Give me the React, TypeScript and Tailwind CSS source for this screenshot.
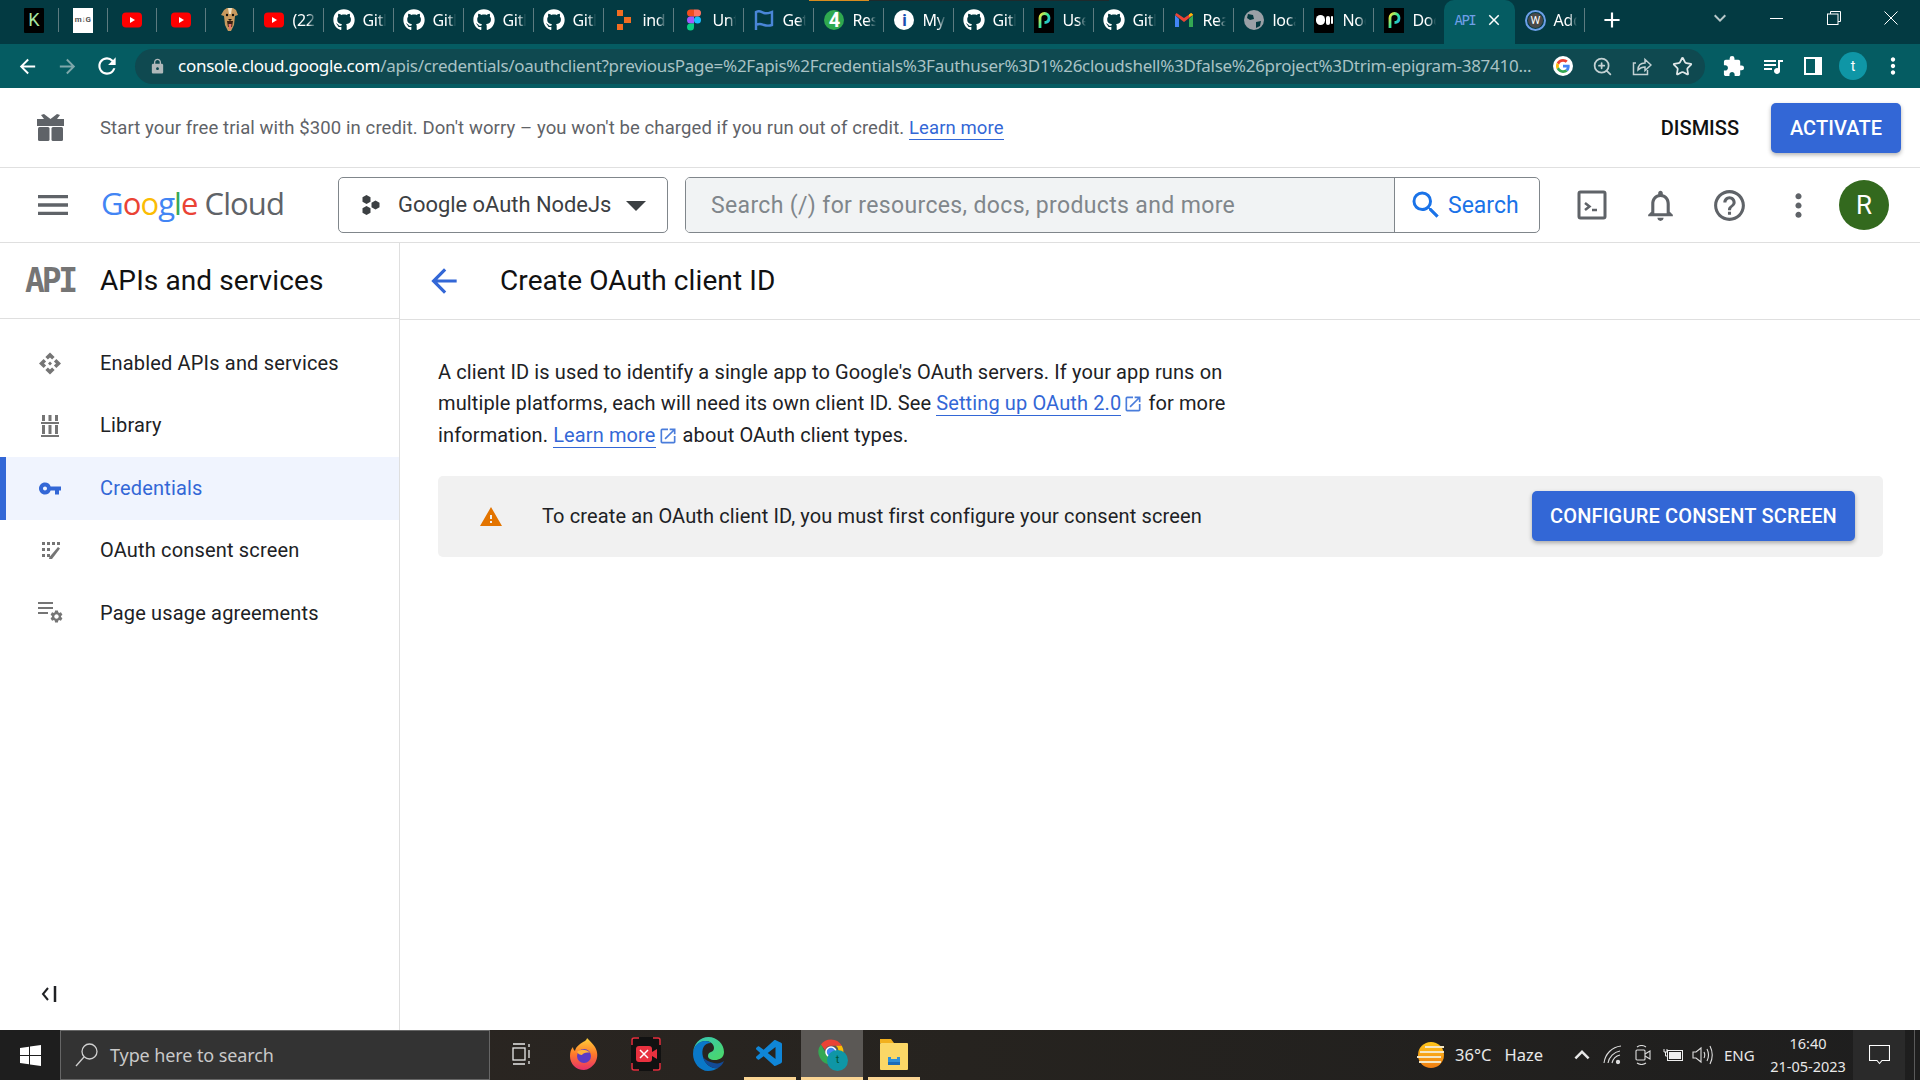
import React from "react";
import { FaGithub } from "react-icons/fa";
import { VscVscode } from "react-icons/vsc";
import {
  MdApi, MdArrowBack, MdArrowForward, MdClose, MdExpandMore, MdExtension, MdHelpOutline, MdLock, MdMenu, MdMoreVert,
  MdNotificationsNone, MdOpenInNew, MdQueueMusic, MdRefresh, MdSearch, MdSettings, MdVpnKey, MdWarning, MdAdd, MdArrowDropDown,
  MdKeyboardArrowUp,
} from "react-icons/md";
import { ZoomIn, Star } from "lucide-react";

const Yt = () => (
  <svg width="20" height="16" viewBox="0 0 20 16"><rect width="20" height="15" y="0.5" rx="4" fill="#f00" /><path d="M8 5l5 3-5 3z" fill="#fff" /></svg>
);
const Gh = () => <FaGithub size={22} color="#fff" />;
const K = () => (
  <div className="w-[20px] h-[25px] bg-black flex items-center justify-center text-[#a8e6a0] text-[18px] leading-none rounded-[1px]">K</div>
);
const Md = () => (
  <div className="w-[20px] h-[25px] bg-white flex items-center justify-center text-[#555] text-[8px] font-bold leading-none">m↓G</div>
);
const Dog = () => (
  <svg width="18" height="26" viewBox="0 0 18 26">
    <path d="M3 3l3-2h6l3 2 2 5-3 1-1 9-3 6H7l-3-6-1-9-3-1z" fill="#c89a5e" />
    <path d="M6 14h6l-1 6H7z" fill="#3a2014" /><path d="M7.5 17h3l-.5 5H8z" fill="#e9756b" />
    <circle cx="6" cy="8" r="1.2" fill="#111" /><circle cx="12" cy="8" r="1.2" fill="#111" /><path d="M7 12h4l-2 2z" fill="#111" />
    <path d="M7 1h4l-1 6H8z" fill="#f2e3c6" />
  </svg>
);
const Ind = () => (
  <svg width="16" height="20" viewBox="0 0 16 20"><rect x="1" y="0" width="6" height="6" fill="#f36d21" /><rect x="8" y="7" width="7" height="6" fill="#f36d21" /><rect x="1" y="14" width="6" height="6" fill="#f36d21" /></svg>
);
const Figma = () => (
  <svg width="14" height="22" viewBox="0 0 14 21">
    <path d="M0 3.5A3.5 3.5 0 013.5 0H7v7H3.500A3.500 3.500 0 010 3.500z" fill="#f24e1e" />
    <path d="M7 0h3.500a3.500 3.500 0 010 7H7z" fill="#ff7262" />
    <path d="M0 10.500A3.500 3.500 0 013.500 7H7v7H3.500A3.500 3.500 0 010 10.500z" fill="#a259ff" />
    <circle cx="10.500" cy="10.500" r="3.500" fill="#1abcfe" />
    <path d="M0 17.500A3.500 3.500 0 013.500 14H7v3.500a3.500 3.500 0 01-7 0z" fill="#0acf83" />
  </svg>
);
const Flag = () => (
  <svg width="20" height="22" viewBox="0 0 20 22" fill="none" stroke="#4a86d8" strokeWidth="2.400"><path d="M2 21V3c4-2 5 0 8 1s5 0 8-1v13c-3 1-5 1-8 0s-4-2-8 0" /></svg>
);
const Four = () => (
  <div className="w-[20px] h-[20px] rounded-full bg-[#2fa84f] text-white text-[20px] font-bold leading-none flex items-center justify-center overflow-hidden">4</div>
);
const Info = () => (
  <div className="w-[20px] h-[20px] rounded-full bg-white text-[#1a4fb0] text-[17px] font-bold leading-none flex items-center justify-center">i</div>
);
const Pd = ({ id }: { id: string }) => (
  <svg width="20" height="25" viewBox="0 0 20 25"><rect width="20" height="25" fill="#000" /><path d="M6 20V10a4.500 4.500 0 019 0c0 3-2 4.500-4.500 4.500" fill="none" stroke={`url(#${id})`} strokeWidth="2.800" /><defs><linearGradient id={id} x1="0" y1="0" x2="1" y2="1"><stop offset="0" stopColor="#f7e733" /><stop offset="0.500" stopColor="#27e5a5" /><stop offset="1" stopColor="#2a8ff7" /></linearGradient></defs></svg>
);
const Gmail = () => (
  <svg width="18" height="15" viewBox="0 0 18 15">
    <path d="M0 2v12h4V6z" fill="#4285f4" /><path d="M18 2v12h-4V6z" fill="#34a853" /><path d="M0 2l9 7 9-7-1.500-2L9 5 1.500 0z" fill="#ea4335" /><path d="M14 4l4-2v-.5L16 0l-2 1.500z" fill="#fbbc04" />
  </svg>
);
const Globe = () => (
  <svg width="20" height="20" viewBox="0 0 20 20"><circle cx="10" cy="10" r="10" fill="#9aa0a6" /><path d="M4 4l5 1 1 4-4 1-3-2zM12 12l5-1-1 5-4 2z" fill="#04383f" /></svg>
);
const Medium = () => (
  <div className="w-[20px] h-[25px] bg-black rounded-[1px] flex items-center justify-center gap-[1px]">
    <span className="w-[9px] h-[10px] rounded-full bg-white" /><span className="w-[4px] h-[9px] rounded-full bg-white" /><span className="w-[2px] h-[8px] rounded-full bg-white" />
  </div>
);
const Wp = () => (
  <div className="w-[21px] h-[21px] rounded-full border-[2px] border-[#6c9fe8] flex items-center justify-center">
    <div className="w-[15px] h-[15px] rounded-full bg-[#4a4a4a] text-white text-[11px] leading-none flex items-center justify-center">W</div>
  </div>
);

const Divider = () => <div className="w-px h-[24px] bg-[#5d7b80] ml-auto shrink-0" />;

function Pinned({ icon }: { icon: React.ReactNode }) {
  return (
    <div className="w-[48.9px] h-[40px] flex items-center shrink-0">
      <div className="flex-1 flex justify-center">{icon}</div>
      <Divider />
    </div>
  );
}

function Tab({ icon, title, noDiv }: { icon: React.ReactNode; title: string; noDiv?: boolean }) {
  return (
    <div className="w-[70px] h-[40px] flex items-center shrink-0">
      <div className="w-[38px] pl-[2px] flex justify-center shrink-0">{icon}</div>
      <div className="w-[24px] overflow-hidden whitespace-nowrap text-white text-[16px] tracking-[-0.300px] [mask-image:linear-gradient(to_right,black_65%,transparent)] [font-family:'Noto_Sans',sans-serif]">{title}</div>
      {!noDiv && <Divider />}
    </div>
  );
}

function TabStrip() {
  return (
    <div className="relative h-[44px] bg-[#033a42] flex pl-[10px] shrink-0">
      <div className="absolute top-0 left-[809px] w-[60px] h-px bg-[#d98d1f]" />
      <div className="absolute top-0 left-[869px] w-[240px] h-px bg-[#1f2a2c]" />
      <Pinned icon={<K />} />
      <Pinned icon={<Md />} />
      <Pinned icon={<Yt />} />
      <Pinned icon={<Yt />} />
      <Pinned icon={<Dog />} />
      <Tab icon={<Yt />} title="(22) YouTube" />
      <Tab icon={<Gh />} title="GitHub" />
      <Tab icon={<Gh />} title="GitHub" />
      <Tab icon={<Gh />} title="GitHub" />
      <Tab icon={<Gh />} title="GitHub" />
      <Tab icon={<Ind />} title="index" />
      <Tab icon={<Figma />} title="Untitled" />
      <Tab icon={<Flag />} title="Get" />
      <Tab icon={<Four />} title="Resend" />
      <Tab icon={<Info />} title="My" />
      <Tab icon={<Gh />} title="GitHub" />
      <Tab icon={<Pd id="pd1" />} title="Use" />
      <Tab icon={<Gh />} title="GitHub" />
      <Tab icon={<Gmail />} title="Read" />
      <Tab icon={<Globe />} title="localhost" />
      <Tab icon={<Medium />} title="Node" />
      <Tab icon={<Pd id="pd2" />} title="Docs" noDiv />
      <div className="w-[71px] h-[44px] bg-[#055c62] rounded-t-[10px] flex items-center pl-[10px] pb-[4px] shrink-0">
        <span className="w-[20px] text-[14px] text-[#6f9fe8] [font-family:'DejaVu_Sans_Mono',monospace] tracking-[-1.500px]">API</span>
        <MdClose size={18} color="#fff" className="ml-[11px]" />
      </div>
      <Tab icon={<Wp />} title="Add" />
      <div className="w-[54px] h-[40px] flex items-center justify-center shrink-0"><MdAdd size={26} color="#fff" /></div>
      <div className="ml-auto flex h-[36px] text-white">
        <div className="w-[57px] flex items-center justify-center"><MdExpandMore size={24} color="#b8c8ca" /></div>
        <div className="w-[57px] flex items-center justify-center"><div className="w-[13px] h-px bg-white" /></div>
        <div className="w-[57px] flex items-center justify-center">
          <svg width="14" height="14" viewBox="0 0 14 14" fill="none" stroke="#fff"><path d="M3.500 3V.5h10v10H11" /><rect x=".5" y="3" width="10.500" height="10.500" /></svg>
        </div>
        <div className="w-[58px] flex items-center justify-center">
          <svg width="14" height="14" viewBox="0 0 14 14" stroke="#fff"><path d="M.5.5l13 13M13.500.5l-13 13" /></svg>
        </div>
      </div>
    </div>
  );
}

function ToolBar() {
  const slot = "w-[40px] h-full flex items-center justify-center shrink-0";
  return (
    <div className="h-[44px] bg-[#055c62] flex items-center pl-[7px] shrink-0">
      <div className={slot}><MdArrowBack size={23} color="#fff" /></div>
      <div className={slot}><MdArrowForward size={23} color="#7fa8ab" /></div>
      <div className={slot}><MdRefresh size={26} color="#fff" /></div>
      <div className="ml-[8px] w-[1570px] h-[35px] rounded-full bg-[#0f4950] flex items-center pl-[14px] shrink-0">
        <MdLock size={17} color="#b0b8ba" className="shrink-0" />
        <div className="ml-[12px] w-[1354px] shrink-0 overflow-hidden whitespace-nowrap text-[17px] tracking-[-0.270px] text-[#a9c2c5] [font-family:'Noto_Sans',sans-serif]">
          <span className="text-white">console.cloud.google.com</span>/apis/credentials/oauthclient?previousPage=%2Fapis%2Fcredentials%3Fauthuser%3D1%26cloudshell%3Dfalse%26project%3Dtrim-epigram-387410...
        </div>
        <div className="ml-[11px] w-[39px] h-full flex items-center justify-center shrink-0">
          <div className="w-[20px] h-[20px] rounded-full bg-white flex items-center justify-center">
            <svg width="14" height="14" viewBox="0 0 48 48">
              <path fill="#EA4335" d="M24 9.500c3.500 0 6.700 1.200 9.200 3.600l6.900-6.900C35.900 2.400 30.500 0 24 0 14.600 0 6.500 5.400 2.600 13.200l8 6.200C12.400 13.700 17.700 9.500 24 9.500z" />
              <path fill="#4285F4" d="M46.900 24.500c0-1.600-.1-3.100-.4-4.500H24v9h12.900c-.6 3-2.200 5.500-4.700 7.200l7.700 6c4.500-4.200 7-10.300 7-17.700z" />
              <path fill="#FBBC05" d="M10.500 28.600c-.5-1.400-.8-3-.8-4.600s.3-3.200.8-4.600l-8-6.200C1 16.400 0 20.100 0 24s.9 7.600 2.600 10.800l7.900-6.200z" />
              <path fill="#34A853" d="M24 48c6.500 0 11.900-2.100 15.900-5.800l-7.700-6c-2.200 1.500-5 2.300-8.200 2.300-6.300 0-11.600-4.200-13.500-10l-8 6.200C6.500 42.600 14.600 48 24 48z" />
            </svg>
          </div>
        </div>
        <div className={slot}><ZoomIn size={21} color="#c3d1d3" /></div>
        <div className={slot}>
          <svg width="20" height="20" viewBox="0 0 20 20" fill="none" stroke="#c3d1d3" strokeWidth="1.500"><path d="M4 7H1.500v11.500h14V14" /><path d="M6 14c0-5 3-7 7-7V3.500L19 9l-6 5.500V11c-3 0-5 1-7 3z" /></svg>
        </div>
        <div className={slot}><Star size={21} color="#e0e8e9" /></div>
      </div>
      <div className="ml-[8px] flex h-full">
        <div className={slot}><MdExtension size={23} color="#fff" /></div>
        <div className={slot}><MdQueueMusic size={24} color="#fff" /></div>
        <div className={slot}>
          <svg width="18" height="18" viewBox="0 0 18 18"><rect x="1" y="1" width="16" height="16" fill="none" stroke="#fff" strokeWidth="2" /><rect x="11" y="1" width="6" height="16" fill="#fff" /></svg>
        </div>
        <div className={slot}><div className="w-[28px] h-[28px] rounded-full bg-[#0f96a6] text-white text-[14px] flex items-center justify-center">t</div></div>
        <div className={slot}><MdMoreVert size={26} color="#fff" /></div>
      </div>
    </div>
  );
}

function Banner() {
  return (
    <div className="h-[80px] border-b border-[#e0e0e0] flex items-center shrink-0 bg-white">
      <div className="w-[100px] flex justify-center shrink-0">
        <svg width="29" height="29" viewBox="0 0 29 29" fill="#5f6368">
          <path d="M8 1l6.500 5L21 1l3 1-3 4h7v7H1V6h7L5 2z" />
          <rect x="2" y="14" width="11.500" height="14" rx="1.500" /><rect x="15.500" y="14" width="11.500" height="14" rx="1.500" />
        </svg>
      </div>
      <div className="text-[18.500px] text-[#5f6368] tracking-[0.100px] pt-[3px]">
        Start your free trial with $300 in credit. Don't worry – you won't be charged if you run out of credit.{" "}
        <span className="text-[#3367d6] border-b-[1.500px] border-[#3367d6]">Learn more</span>
      </div>
      <div className="ml-auto text-[20px] font-medium text-[#111] pt-[1px]">DISMISS</div>
      <div className="ml-[32px] mr-[19px] w-[130px] h-[50px] rounded-[5px] bg-[#3367d6] shadow-[0_2px_4px_rgba(0,0,0,0.3)] text-white text-[20px] font-medium tracking-[0.100px] flex items-center justify-center">ACTIVATE</div>
    </div>
  );
}

function Header() {
  return (
    <div className="h-[75px] border-b border-[#dfdfdf] flex items-center shrink-0 bg-white">
      <div className="w-[101px] pl-[33px] shrink-0"><MdMenu size={40} color="#5f6368" /></div>
      <div className="w-[237px] shrink-0 flex items-baseline text-[31px] leading-none tracking-[-0.900px] [font-family:'Open_Sans',sans-serif] pb-[4px]">
        <span className="text-[#4285f4]">G</span><span className="text-[#ea4335]">o</span><span className="text-[#fbbc04]">o</span><span className="text-[#4285f4]">g</span><span className="text-[#34a853]">l</span><span className="text-[#ea4335]">e</span>
        <span className="text-[#5f6368] ml-[7px]">Cloud</span>
      </div>
      <div className="w-[330px] h-[56px] rounded-[5px] border border-[#80868b] flex items-center shrink-0">
        <svg className="ml-[20px] shrink-0" width="24" height="24" viewBox="0 0 24 24" fill="#3c4043"><path d="M7.500 2l4 2.200v4.600l-4 2.200-4-2.200V4.200zM7.500 13l4 2.200v4.600l-4 2.200-4-2.200v-4.600zM16.500 7.500l4 2.200v4.600l-4 2.200-4-2.200V9.700z" /></svg>
        <span className="ml-[15px] text-[21.900px] text-[#3c4043] whitespace-nowrap pt-px">Google oAuth NodeJs</span>
        <MdArrowDropDown size={48} color="#3c4043" className="ml-[1px] shrink-0" />
      </div>
      <div className="ml-[17px] w-[855px] h-[56px] rounded-[5px] border border-[#80868b] flex shrink-0 overflow-hidden">
        <div className="w-[709px] bg-[#f1f3f4] border-r border-[#80868b] flex items-center pl-[25px] pt-[2px] text-[23px] tracking-[0.350px] text-[#80868b] whitespace-nowrap shrink-0">Search (/) for resources, docs, products and more</div>
        <div className="flex-1 flex items-center pl-[13px] text-[#1a73e8] text-[23px]">
          <MdSearch size={36} color="#1a73e8" className="shrink-0" /><span className="ml-[4px] pt-[3px]">Search</span>
        </div>
      </div>
      <div className="ml-[18px] w-[68px] flex justify-center shrink-0">
        <svg width="30" height="30" viewBox="0 0 30 30" fill="none" stroke="#5f6368"><rect x="2" y="2" width="26" height="26" rx="1.500" strokeWidth="3" /><path d="M8 13l4.500 3.500L8 20" strokeWidth="2.500" /><path d="M15 20h5" strokeWidth="2.500" /></svg>
      </div>
      <div className="w-[69px] flex justify-center shrink-0"><MdNotificationsNone size={37} color="#5f6368" /></div>
      <div className="w-[69px] flex justify-center shrink-0"><MdHelpOutline size={37} color="#5f6368" /></div>
      <div className="w-[69px] flex justify-center shrink-0"><MdMoreVert size={37} color="#5f6368" /></div>
      <div className="ml-[6px] w-[50px] h-[50px] rounded-full bg-[#33691e] text-white text-[26px] flex items-center justify-center shrink-0">R</div>
    </div>
  );
}

const LibraryIcon = () => (
  <svg width="18" height="22" viewBox="0 0 18 22" fill="#757575">
    <rect x="1" y="0" width="3" height="6" /><rect x="7.500" y="0" width="3" height="6" /><rect x="14" y="0" width="3" height="6" />
    <rect x="0" y="7" width="18" height="2" />
    <rect x="1" y="10" width="3" height="9" /><rect x="7.500" y="10" width="3" height="9" /><rect x="14" y="10" width="3" height="9" />
    <rect x="0" y="20" width="18" height="2" />
  </svg>
);
const ConsentIcon = () => (
  <svg width="24" height="24" viewBox="0 0 24 24" fill="#757575">
    <rect x="4" y="3" width="3" height="3" /><rect x="9" y="3" width="3" height="3" /><rect x="14" y="3" width="3" height="3" /><rect x="19" y="3" width="3" height="3" />
    <rect x="4" y="9" width="3" height="3" /><rect x="9" y="9" width="3" height="3" /><rect x="4" y="15" width="3" height="3" /><rect x="9" y="15" width="3" height="3" />
    <path d="M20 8l2 1.500-8 10.500h-3l.5-2z" />
  </svg>
);
const UsageIcon = () => (
  <div className="w-[24px] h-[24px] relative">
    <div className="w-[15px] h-[2px] bg-[#757575] mt-[1px]" />
    <div className="w-[15px] h-[2px] bg-[#757575] mt-[3px]" />
    <div className="w-[10px] h-[2px] bg-[#757575] mt-[3px]" />
    <MdSettings size={15} color="#757575" className="absolute right-[-2px] bottom-[1px]" />
  </div>
);

function NavItem({ icon, label, active }: { icon: React.ReactNode; label: string; active?: boolean }) {
  return (
    <div className={active ? "h-[62.500px] flex items-center bg-[#f0f4fe] border-l-[6px] border-[#3367d6] text-[#3367d6]" : "h-[62.500px] flex items-center border-l-[6px] border-transparent text-[#202124]"}>
      <div className="w-[88px] pl-[32px] shrink-0 flex"><div className="w-[24px] flex justify-center">{icon}</div></div>
      <span className="ml-[6px] text-[20px] tracking-[0.170px] whitespace-nowrap pb-px">{label}</span>
    </div>
  );
}

function Sidebar() {
  return (
    <div className="w-[400px] border-r border-[#dfdfdf] flex flex-col shrink-0">
      <div className="h-[76px] border-b border-[#dfdfdf] flex items-center shrink-0">
        <div className="w-[100px] pl-[25px] text-[33px] font-bold text-[#757575] leading-none tracking-[-3.200px] [font-family:'DejaVu_Sans_Mono',monospace] shrink-0">API</div>
        <span className="text-[28px] text-[#111] tracking-[0.100px]">APIs and services</span>
      </div>
      <div className="pt-[13px] flex flex-col">
        <NavItem icon={<MdApi size={27} color="#757575" />} label="Enabled APIs and services" />
        <NavItem icon={<LibraryIcon />} label="Library" />
        <NavItem active icon={<MdVpnKey size={25} color="#3367d6" />} label="Credentials" />
        <NavItem icon={<ConsentIcon />} label="OAuth consent screen" />
        <NavItem icon={<UsageIcon />} label="Page usage agreements" />
      </div>
      <div className="mt-auto h-[72px] pl-[41px] flex items-start pt-[27px]">
        <svg width="16" height="18" viewBox="0 0 16 18" fill="none" stroke="#202124" strokeWidth="2"><path d="M7 3L2 9l5 6" /><path d="M14 1v16" strokeWidth="2.500" /></svg>
      </div>
    </div>
  );
}

function Ext() {
  return <MdOpenInNew size={20} color="#4a7ddb" className="inline-block ml-[2px] align-[-4px]" />;
}

function Main() {
  return (
    <div className="flex-1 flex flex-col min-w-0">
      <div className="h-[77px] border-b border-[#dfdfdf] flex items-center shrink-0">
        <div className="w-[100px] pl-[25px] shrink-0"><MdArrowBack size={38} color="#3367d6" /></div>
        <span className="text-[28px] text-[#111] tracking-[0.100px]">Create OAuth client ID</span>
      </div>
      <div className="pl-[38px] pr-[37px] pt-[37px]">
        <p className="w-[800px] text-[20px] leading-[31.400px] text-[#202124] tracking-[0.120px]">
          A client ID is used to identify a single app to Google's OAuth servers. If your app runs on multiple platforms, each will need its own client ID. See{" "}
          <span className="text-[#3367d6] border-b-[1.500px] border-[#3367d6]">Setting up OAuth 2.0</span><Ext /> for more information.{" "}
          <span className="text-[#3367d6] border-b-[1.500px] border-[#3367d6]">Learn more</span><Ext /> about OAuth client types.
        </p>
        <div className="mt-[25px] h-[81px] rounded-[5px] bg-[#f1f1f1] flex items-center pl-[41px] pr-[28px]">
          <MdWarning size={24} color="#e37400" className="shrink-0" />
          <span className="ml-[39px] text-[20px] tracking-[0.120px] text-[#202124] pb-px">To create an OAuth client ID, you must first configure your consent screen</span>
          <div className="ml-auto mb-[2px] w-[323px] h-[50px] rounded-[5px] bg-[#3367d6] shadow-[0_2px_4px_rgba(0,0,0,0.3)] text-white text-[20px] font-medium tracking-[0.170px] flex items-center justify-center shrink-0">CONFIGURE CONSENT SCREEN</div>
        </div>
      </div>
    </div>
  );
}

const Firefox = () => (
  <svg width="30" height="32" viewBox="0 0 30 32">
    <defs><linearGradient id="ffg" x1="0" y1="0" x2="0" y2="1"><stop offset="0" stopColor="#ffd23a" /><stop offset="0.500" stopColor="#ff7a2a" /><stop offset="1" stopColor="#e62f6c" /></linearGradient></defs>
    <path d="M18 0c3 3 6 6 8 9 3 5 3 11 0 16-3 4-7 7-11 7C7 32 1 26 1 18c0-4 1-7 3-9 0 2 1 3 2 4 1-5 6-8 10-10 1-1 2-2 2-3z" fill="url(#ffg)" />
    <circle cx="15" cy="18" r="7" fill="#5b3bc4" />
    <path d="M8 14c3-3 10-3 13 1-3-1-7 0-8 2-2 0-4-1-5-3z" fill="#ffb13a" />
  </svg>
);
const Recorder = () => (
  <svg width="30" height="34" viewBox="0 0 30 34">
    <rect width="30" height="34" rx="4" fill="#111" />
    <path d="M1 8V3a2 2 0 012-2h5M22 1h5a2 2 0 012 2v5M1 26v5a2 2 0 002 2h5M22 33h5a2 2 0 002-2v-5" fill="none" stroke="#e8313f" strokeWidth="1.500" />
    <rect x="5" y="9" width="16" height="16" rx="3" fill="#e8313f" /><path d="M21 15l5-3v10l-5-3z" fill="#e8313f" /><path d="M9 13l8 8M17 13l-8 8" stroke="#fff" strokeWidth="1.500" />
  </svg>
);
const Edge = () => (
  <svg width="31" height="34" viewBox="0 0 31 34">
    <defs><linearGradient id="edg" x1="0" y1="0" x2="1" y2="1"><stop offset="0" stopColor="#36c5b8" /><stop offset="1" stopColor="#4cd964" /></linearGradient></defs>
    <path d="M15.500 0C24 0 31 7 31 15c0 6-5 8-9 8-5 0-7-2-7-4 0-5 6-3 6-8 0-4-4-7-8-7C6 4 0 10 0 17 0 7 7 0 15.500 0z" fill="url(#edg)" />
    <path d="M0 17c0-8 6-13 12-13 4 0 6 2 6 2-7 0-10 6-8 14 2 7 8 12 15 11-3 2-6 3-10 3C7 34 0 26 0 17z" fill="#0a78c8" />
    <path d="M10 20c2 7 8 12 15 11 3-2 5-4 6-7-3 2-6 3-10 2-5-1-9-3-11-6z" fill="#134a96" />
  </svg>
);
const Chrome = () => (
  <div className="relative w-[32px] h-[34px]">
    <svg width="30" height="30" viewBox="0 0 48 48">
      <path d="M24 4a20 20 0 0117.300 10H24a10 10 0 00-9.500 6.900L7.900 12A20 20 0 0124 4z" fill="#ea4335" />
      <path d="M41.300 14A20 20 0 0124 44l8.700-15A10 10 0 0032 14z" fill="#fbbc04" />
      <path d="M24 44A20 20 0 017.900 12l8.500 15A10 10 0 0032.700 29z" fill="#34a853" />
      <circle cx="24" cy="24" r="8" fill="#4285f4" stroke="#fff" strokeWidth="2.500" />
    </svg>
    <div className="absolute right-0 bottom-0 w-[21px] h-[21px] rounded-full bg-[#0f96a6] text-[#053] text-[11px] flex items-center justify-center">t</div>
  </div>
);
const Files = () => (
  <svg width="28" height="32" viewBox="0 0 28 32">
    <path d="M0 1h11l3 4H0z" fill="#f2b01e" /><rect y="5" width="28" height="27" rx="1" fill="#fbd766" />
    <path d="M8 19h12v8H8z" fill="#2f8fd8" /><path d="M11 19a3 3 0 016 0v2h-6z" fill="#fbd766" /><rect x="8" y="24" width="12" height="3" fill="#1a6cb8" />
  </svg>
);

function TaskApp({ children, under, active }: { children: React.ReactNode; under?: "narrow" | "wide"; active?: boolean }) {
  return (
    <div className={active ? "w-[62px] h-full flex flex-col bg-[#5b5855] shrink-0" : "w-[62px] h-full flex flex-col shrink-0"}>
      <div className="flex-1 flex items-center justify-center">{children}</div>
      {under === "narrow" && <div className="h-[3px] mx-[5px] bg-[#fad594]" />}
      {under === "wide" && <div className="h-[3px] bg-[#fad594]" />}
      {!under && <div className="h-[3px]" />}
    </div>
  );
}

function Taskbar() {
  const tray = "[font-family:'Noto_Sans',sans-serif] text-[#e8e8e8]";
  return (
    <div className="h-[50px] flex shrink-0 bg-gradient-to-r from-[#2d2723] via-[#26231f] to-[#1e1e1e]">
      <div className="w-[60px] bg-[#1e1e1e] flex items-center justify-center shrink-0">
        <svg width="21" height="21" viewBox="0 0 21 21" fill="#fff"><path d="M0 3l9-1.300V10H0zM10 1.500L21 0v10H10zM0 11h9v8.300L0 18zM10 11h11v10l-11-1.500z" /></svg>
      </div>
      <div className="w-[430px] bg-[#333] border border-[#666] flex items-center pl-[13px] shrink-0">
        <svg width="26" height="26" viewBox="0 0 26 26" fill="none" stroke="#d0d0d0" strokeWidth="1.300"><circle cx="15.500" cy="9.500" r="7.500" /><path d="M10 15L2 24" /></svg>
        <span className="ml-[10px] text-[18px] text-[#c9c9c9] [font-family:'Noto_Sans',sans-serif] tracking-[-0.100px]">Type here to search</span>
      </div>
      <div className="pl-px flex h-full">
        <TaskApp>
          <svg width="20" height="26" viewBox="0 0 20 26" fill="none" stroke="#e8e8e8" strokeWidth="1.300"><rect x="1" y="7" width="12" height="12" /><path d="M1 3h12M1 23h12M17 3v3M17 9v8M17 20v3" /></svg>
        </TaskApp>
        <TaskApp><Firefox /></TaskApp>
        <TaskApp><Recorder /></TaskApp>
        <TaskApp><Edge /></TaskApp>
        <TaskApp under="narrow"><VscVscode size={32} color="#0f86d8" /></TaskApp>
        <TaskApp under="wide" active><Chrome /></TaskApp>
        <TaskApp under="narrow"><Files /></TaskApp>
      </div>
      <div className="ml-auto flex items-center h-full">
        <svg width="32" height="28" viewBox="0 0 32 28">
          <defs><linearGradient id="sung" x1="0" y1="0" x2="0" y2="1"><stop offset="0" stopColor="#ffc61a" /><stop offset="1" stopColor="#ef7d12" /></linearGradient></defs>
          <circle cx="16" cy="14" r="13" fill="url(#sung)" />
          <path d="M10 6h19M5 11h24M2 16h24M4 21h22" stroke="#f4e6c4" strokeWidth="1.800" />
        </svg>
        <span className={`ml-[8px] text-[16.500px] ${tray}`}>36°C</span>
        <span className={`ml-[13px] text-[16.500px] ${tray}`}>Haze</span>
        <div className="ml-[24px] w-[30px] flex justify-center"><MdKeyboardArrowUp size={30} color="#e8e8e8" /></div>
        <div className="w-[30px] ml-[1px] flex justify-center">
          <svg width="20" height="20" viewBox="0 0 20 20" fill="none" stroke="#ddd" strokeWidth="1.100"><path d="M1 18C2 9 9 2 18 1M5 18c1-6 6-11 12-12M9 18c1-4 3-7 8-8" /><circle cx="15" cy="17" r="1.600" fill="#ddd" /></svg>
        </div>
        <div className="w-[30px] flex justify-center">
          <svg width="16" height="20" viewBox="0 0 16 20" fill="none" stroke="#ddd" strokeWidth="1.100"><path d="M2 2c3-2 6-2 9 0M2 18c3 2 6 2 9 0" /><rect x="1" y="5" width="9" height="10" rx="1" /><path d="M10 9l5-3v8l-5-3" /></svg>
        </div>
        <div className="w-[30px] flex justify-center">
          <svg width="20" height="14" viewBox="0 0 20 14" fill="none" stroke="#eee"><rect x="4.500" y="2.500" width="15" height="10" /><rect x="6" y="4" width="12" height="7" fill="#eee" stroke="none" /><path d="M1 1v3h3V1M2.500 4v4h2" /></svg>
        </div>
        <div className="w-[30px] flex justify-center">
          <svg width="22" height="20" viewBox="0 0 22 20" fill="none" stroke="#ddd" strokeWidth="1.100"><path d="M1 7h3l5-4v14l-5-4H1zM12 7c1 2 1 4 0 6M15 4c2 4 2 8 0 12M18 1c3 6 3 12 0 18" /></svg>
        </div>
        <span className={`ml-[6px] text-[15px] ${tray} w-[29px]`}>ENG</span>
        <div className={`ml-[12px] w-[86px] flex flex-col items-center text-[14.500px] leading-[23px] ${tray}`}>
          <span>16:40</span><span>21-05-2023</span>
        </div>
        <div className="ml-[2px] w-[52px] h-full bg-[#2a2a2a] flex items-center justify-center">
          <svg width="21" height="20" viewBox="0 0 21 20" fill="none" stroke="#fff" strokeWidth="1.100"><path d="M.5.5h20v15H13l-2.500 3-2.500-3H.5z" /></svg>
        </div>
        <div className="w-[15px] h-full flex justify-end pr-[5px]"><div className="w-px h-full bg-[#5a5a5a]" /></div>
      </div>
    </div>
  );
}

export default function App() {
  return (
    <div className="w-[1920px] h-[1080px] flex flex-col overflow-hidden bg-white [font-family:Roboto,sans-serif]">
      <TabStrip />
      <ToolBar />
      <Banner />
      <Header />
      <div className="flex-1 flex min-h-0">
        <Sidebar />
        <Main />
      </div>
      <Taskbar />
    </div>
  );
}
